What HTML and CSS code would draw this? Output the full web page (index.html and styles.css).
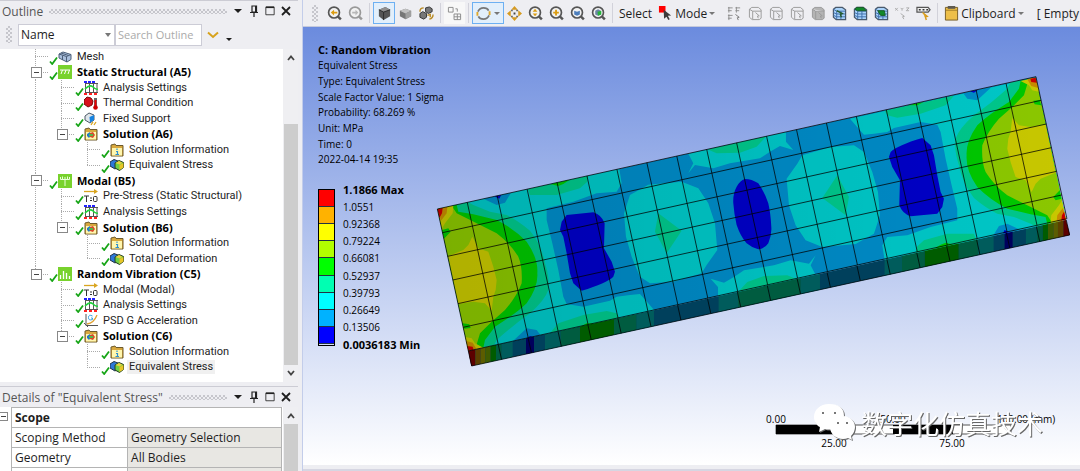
FILE: index.html
```html
<!DOCTYPE html>
<html lang="en">
<head>
    <meta charset="UTF-8">
    <title>Random Vibration - Equivalent Stress</title>
    <link rel="stylesheet" href="styles.css">
</head>
<body>

<!-- shared icons -->
<svg class="defs" width="0" height="0">
    <symbol id="check" viewBox="0 0 9 9"><path d="M1 5.5L3.2 8L8 1.5" fill="none" stroke="#16a516" stroke-width="1.8"/></symbol>
    <symbol id="mesh" viewBox="0 0 14 14"><path d="M1 4L5 2L13 4.500V9.500L9 12L1 8Z" fill="#a9bfdc" stroke="#4c5f78"/><path d="M1 4L8.500 6.500L13 4.500M8.500 6.500V12M4.500 5.500V10M3 3L10.500 5.500" fill="none" stroke="#4c5f78"/></symbol>
    <symbol id="static" viewBox="0 0 14 14"><rect width="14" height="14" fill="#78d22d"/><path d="M2 5H12M4.500 5L3 9M8 5L6.500 9M11.500 5L10 9" fill="none" stroke="#fff"/></symbol>
    <symbol id="modal" viewBox="0 0 14 14"><rect width="14" height="14" fill="#78d22d"/><path d="M7 3V12M2.500 3V5.500H11.500V3M4.500 2.500V5M9.500 2.500V5" fill="none" stroke="#e8ffd8"/></symbol>
    <symbol id="random" viewBox="0 0 14 14"><rect width="14" height="14" fill="#78d22d"/><path d="M2.500 12V8M5.500 12V4M8.500 12V6M11.500 12V9" stroke="#fff" stroke-width="1.300"/></symbol>
    <symbol id="settings" viewBox="0 0 14 14"><path d="M1.500 2V12M5.500 2V12M9.500 2V12M13 2V12M1 2.500H14M1 11.500H14" stroke="#555" fill="none"/><path d="M1 8Q6 3 9 6T14 8" fill="none" stroke="#1fd43a" stroke-width="1.500"/><path d="M0 1H11" stroke="#22f" stroke-width="2" stroke-dasharray="3 1"/><path d="M0 13H14" stroke="#f22" stroke-width="2" stroke-dasharray="3 2"/></symbol>
    <symbol id="thermal" viewBox="0 0 14 14"><path d="M0 4L3 1L7 2L9 5L8 9L4 11L0 8Z" fill="#d8101a" stroke="#7a0a0a"/><path d="M11.500 2V10" stroke="#666" stroke-width="3"/><path d="M11.500 4V11" stroke="#e00" stroke-width="1.800"/><circle cx="11.500" cy="11.500" r="2.300" fill="#c00"/></symbol>
    <symbol id="fixed" viewBox="0 0 14 14"><path d="M1 4L5 1L10 3V8L6 11L1 8Z" fill="#dfe5ea" stroke="#4c5a68"/><path d="M5.500 5L10 3V8L6 10.500Z" fill="#1683e0"/><path d="M7 13L9 10M10 13L12 10" stroke="#d9a520" stroke-width="1.300"/></symbol>
    <symbol id="folder" viewBox="0 0 14 14"><path d="M1 2L5 1L6 2.500H13V13H1Z" fill="#d8a83e" stroke="#6d5a2c"/><path d="M2 5H12V12.500H2Z" fill="#fff6ae"/></symbol>
    <symbol id="solution" viewBox="0 0 14 14"><use href="#folder"/><path d="M3 7L6 5L7 8L5 11L3 9Z" fill="#2576c4"/><path d="M6 6L9 5L11 8L9 11L6 10Z" fill="#d8482c"/><path d="M5 7H9V9H5Z" fill="#54b848"/></symbol>
    <symbol id="info" viewBox="0 0 14 14"><use href="#folder"/><path d="M7 5.500V7M6 8.500H7.500V11.500M5.500 11.500H9" fill="none" stroke="#2d8fd0" stroke-width="1.200"/></symbol>
    <symbol id="stress" viewBox="0 0 14 14"><path d="M0 4L4 1.500L8 3V9L5 11L0 8Z" fill="#2d78d8" stroke="#234"/><path d="M5 5L9 2.500L13.500 4.500V9.500L9.500 12.500L5 10Z" fill="#6fd044" stroke="#243c20"/><path d="M9.500 7L13.500 5V9.500L9.500 12Z" fill="#e8c628"/><path d="M5.500 5L9 3L12.500 4.700L9.500 6.500Z" fill="#e8d040"/></symbol>
    <symbol id="tzero" viewBox="0 0 14 14"><path d="M0 2.500H11" stroke="#d9a520" stroke-width="1.300"/><path d="M10 0L14 2.500L10 5Z" fill="#d9a520"/><path d="M0 7H5M2.500 7V13M6 9H8M6 11.500H8" stroke="#333" fill="none"/><rect x="9.500" y="7.500" width="3.500" height="5" rx="1" fill="none" stroke="#333"/></symbol>
    <symbol id="psd" viewBox="0 0 14 14"><path d="M2 0V11.500H14M0 9L4 13" fill="none" stroke="#555"/><path d="M3 10Q10 9 13 1" fill="none" stroke="#e0a030" stroke-width="1.300"/><path d="M8.500 2Q4.500 0 4.500 3.500T8.500 5.500V4H7" fill="none" stroke="#38a0e0"/></symbol>
    <symbol id="pin" viewBox="0 0 10 12"><path d="M3 1H7.500V7H3ZM1 7.500H9M5 7.500V12" fill="none" stroke="#222" stroke-width="1.200"/><path d="M6 1H8V7H6Z" fill="#222"/></symbol>
    <symbol id="close" viewBox="0 0 10 10"><path d="M1 1L9 9M9 1L1 9" stroke="#1e1e1e" stroke-width="1.800"/></symbol>
    <symbol id="max" viewBox="0 0 12 12"><path d="M1 1.500H11V10.500H1Z" fill="none" stroke="#222"/><path d="M1 1.500H11" stroke="#222" stroke-width="2"/></symbol>
    <symbol id="up" viewBox="0 0 8 6"><path d="M1 5L4 1.500L7 5" fill="none" stroke="#444" stroke-width="1.800"/></symbol>
    <symbol id="lens" viewBox="0 0 16 16"><circle cx="7.500" cy="7" r="5.800" fill="#f2f2f2" stroke="currentColor" stroke-width="1.800"/><path d="M11.500 11L14.800 14.300" stroke="currentColor" stroke-width="2.600"/></symbol>
    <symbol id="wire" viewBox="0 0 16 16"><path d="M1.500 3.500L4 1.500H11L14 4V13L12 14.500H4.500L1.500 12ZM1.500 3.500L5 5.500H14M5 5.500V14" stroke="currentColor"/><path d="M8 7L12 10.500L10 10.800L11 13" fill="none" stroke="currentColor"/></symbol>
    <symbol id="blue" viewBox="0 0 16 16"><path d="M1.500 3.500L4 1.500H11L14.500 4V14.500H4.500L1.500 12Z" fill="#a9d2fa" stroke="#4a5a6c" stroke-width="1.300"/><path d="M1.500 7L5 8.500H14M1.500 10L5 11.500H14M5 5.500V14M9.500 5.500V14M1.500 3.500L5 5.500H14" stroke="#3d6eaa" fill="none"/></symbol>
</svg>

<div class="app">
    <aside class="side">
        <section class="outline">
            <header class="bar">
                <h2>Outline</h2><span class="dots"></span>
                <button class="tri" aria-label="Menu"></button>
                <button aria-label="Pin"><svg width="10" height="12"><use href="#pin"/></svg></button>
                <button aria-label="Maximize"><svg width="12" height="12"><use href="#max"/></svg></button>
                <button aria-label="Close"><svg width="10" height="10"><use href="#close"/></svg></button>
            </header>
            <div class="filter">
                <span class="grip"></span>
                <div class="pick"><select aria-label="Filter by"><option>Name</option></select></div>
                <input type="text" placeholder="Search Outline" aria-label="Search Outline">
                <button class="go" aria-label="Search"><svg width="12" height="8" viewBox="0 0 12 8"><path d="M1 1.500L6 6L11 1.500" fill="none" stroke="#d7a21c" stroke-width="2"/></svg></button>
                <button class="tri small" aria-label="More"></button>
            </div>
            <div class="pane">
                <ul class="tree">
                    <li class="l1"><i></i><svg class="ok"><use href="#check"/></svg><svg class="ico"><use href="#mesh"/></svg><span>Mesh</span></li>
                    <li class="l1 open"><i></i><svg class="ok"><use href="#check"/></svg><svg class="ico"><use href="#static"/></svg><b>Static Structural (A5)</b></li>
                    <li class="l2"><i></i><svg class="ok"><use href="#check"/></svg><svg class="ico"><use href="#settings"/></svg><span>Analysis Settings</span></li>
                    <li class="l2"><i></i><svg class="ok"><use href="#check"/></svg><svg class="ico"><use href="#thermal"/></svg><span>Thermal Condition</span></li>
                    <li class="l2"><i></i><svg class="ok"><use href="#check"/></svg><svg class="ico"><use href="#fixed"/></svg><span>Fixed Support</span></li>
                    <li class="l2 open last"><i></i><svg class="ok"><use href="#check"/></svg><svg class="ico"><use href="#solution"/></svg><b>Solution (A6)</b></li>
                    <li class="l3"><i></i><svg class="ok"><use href="#check"/></svg><svg class="ico"><use href="#info"/></svg><span>Solution Information</span></li>
                    <li class="l3 last"><i></i><svg class="ok"><use href="#check"/></svg><svg class="ico"><use href="#stress"/></svg><span>Equivalent Stress</span></li>
                    <li class="l1 open"><i></i><svg class="ok"><use href="#check"/></svg><svg class="ico"><use href="#modal"/></svg><b>Modal (B5)</b></li>
                    <li class="l2"><i></i><svg class="ok"><use href="#check"/></svg><svg class="ico"><use href="#tzero"/></svg><span>Pre-Stress (Static Structural)</span></li>
                    <li class="l2"><i></i><svg class="ok"><use href="#check"/></svg><svg class="ico"><use href="#settings"/></svg><span>Analysis Settings</span></li>
                    <li class="l2 open last"><i></i><svg class="ok"><use href="#check"/></svg><svg class="ico"><use href="#solution"/></svg><b>Solution (B6)</b></li>
                    <li class="l3"><i></i><svg class="ok"><use href="#check"/></svg><svg class="ico"><use href="#info"/></svg><span>Solution Information</span></li>
                    <li class="l3 last"><i></i><svg class="ok"><use href="#check"/></svg><svg class="ico"><use href="#stress"/></svg><span>Total Deformation</span></li>
                    <li class="l1 open last"><i></i><svg class="ok"><use href="#check"/></svg><svg class="ico"><use href="#random"/></svg><b>Random Vibration (C5)</b></li>
                    <li class="l2 tail"><i></i><svg class="ok"><use href="#check"/></svg><svg class="ico"><use href="#tzero"/></svg><span>Modal (Modal)</span></li>
                    <li class="l2 tail"><i></i><svg class="ok"><use href="#check"/></svg><svg class="ico"><use href="#settings"/></svg><span>Analysis Settings</span></li>
                    <li class="l2 tail"><i></i><svg class="ok"><use href="#check"/></svg><svg class="ico"><use href="#psd"/></svg><span>PSD G Acceleration</span></li>
                    <li class="l2 tail open last"><i></i><svg class="ok"><use href="#check"/></svg><svg class="ico"><use href="#solution"/></svg><b>Solution (C6)</b></li>
                    <li class="l3 tail"><i></i><svg class="ok"><use href="#check"/></svg><svg class="ico"><use href="#info"/></svg><span>Solution Information</span></li>
                    <li class="l3 tail last"><i></i><svg class="ok"><use href="#check"/></svg><svg class="ico"><use href="#stress"/></svg><span class="current">Equivalent Stress</span></li>
                </ul>
                <div class="scroll">
                    <svg width="8" height="6"><use href="#up"/></svg>
                    <div class="thumb"></div>
                    <svg class="down" width="8" height="6"><use href="#up"/></svg>
                </div>
            </div>
        </section>

        <section class="details">
            <header class="bar">
                <h2>Details of "Equivalent Stress"</h2><span class="dots"></span>
                <button class="tri" aria-label="Menu"></button>
                <button aria-label="Pin"><svg width="10" height="12"><use href="#pin"/></svg></button>
                <button aria-label="Maximize"><svg width="12" height="12"><use href="#max"/></svg></button>
                <button aria-label="Close"><svg width="10" height="10"><use href="#close"/></svg></button>
            </header>
            <div class="pane">
                <div class="fold"><span class="minus"></span></div>
                <table>
                    <tr><th colspan="2">Scope</th></tr>
                    <tr><td>Scoping Method</td><td class="val">Geometry Selection</td></tr>
                    <tr><td>Geometry</td><td class="val">All Bodies</td></tr>
                    <tr><td></td><td class="val"></td></tr>
                </table>
                <div class="scroll">
                    <svg width="8" height="6"><use href="#up"/></svg>
                    <div class="thumb full"></div>
                </div>
            </div>
        </section>
    </aside>

    <main class="main">
        <nav class="tools">
            <span class="grip"></span>
            <button class="first" aria-label="Previous view"><svg class="t" viewBox="0 0 16 16"><use href="#lens"/><path d="M4 7L7.500 4V6H11V8H7.500V10Z" fill="#dc9d12"/></svg></button>
            <button class="off" aria-label="Next view"><svg class="t" viewBox="0 0 16 16"><use href="#lens"/><path d="M11 7L8 4V6H4.500V8H8V10Z" fill="#b8b8b8"/></svg></button>
            <span class="sep"></span>
            <button class="on" aria-label="Shaded with edges"><svg class="t" viewBox="0 0 16 16"><path d="M2 4L9 1L14 4V11L7 15L2 11Z" fill="#555"/><path d="M2 4L9 1L14 4L7 6.500Z" fill="#909090"/><path d="M2 4L7 6.500V15M7 6.500L14 4" fill="none" stroke="#2b2b2b"/></svg></button>
            <button aria-label="Shaded"><svg class="t" viewBox="0 0 16 16"><path d="M2 5L8 3L14 5V11L8 14L2 11Z" fill="#777"/><path d="M2 5L8 3L14 5L8 8Z" fill="#c2c2c2"/><path d="M8 8L14 5V11L8 14Z" fill="#a0a0a0"/></svg></button>
            <button aria-label="Show bodies"><svg class="t" viewBox="0 0 16 16"><path d="M7 2L11 1L14 3V6L10 8L7 6ZM1 8L4 6L8 8V12L5 14L1 12Z" fill="#777" stroke="#333"/><path d="M1 6Q1 2 5 2M15 9Q15 13 11 14M9 10L12 9V12" fill="none" stroke="#b98b24" stroke-width="1.500"/></svg></button>
            <span class="sep"></span>
            <button class="pale" aria-label="Explode"><svg class="t" viewBox="0 0 16 16"><path d="M1.500 1.500H6.500V6.500H1.500ZM7.500 8.500H14.500V14.500H7.500ZM11 8.500V14.500M7.500 11.500H14.500M9 3H11V6" fill="none" stroke="#8b8b8b"/></svg></button>
            <span class="sep"></span>
            <button class="on wide" aria-label="Rotate"><svg class="t" viewBox="0 0 16 16"><path d="M2 6Q4 2 8 2T13.500 5M14 10Q12 14 8 14T2.500 11" fill="none" stroke="#777" stroke-width="1.900"/><path d="M1.500 6.500V10.500M14.500 5.500V9.500" stroke="#e0a92b" stroke-width="2"/></svg><span class="caret"></span></button>
            <button aria-label="Pan"><svg class="t" viewBox="0 0 16 16"><path d="M8 0L11.500 4H4.500ZM8 16L4.500 12H11.500ZM0 8L4 4.500V11.500ZM16 8L12 11.500V4.500Z" fill="#d69b20"/><path d="M7 7H9V9H7ZM4.500 4H6V5.500H4.500ZM10 10.500H11.500V12H10ZM10 4H11.500V5.500H10ZM4.500 10.500H6V12H4.500Z" fill="#444"/></svg></button>
            <button aria-label="Zoom"><svg class="t" viewBox="0 0 16 16"><use href="#lens"/><path d="M7.500 3L10 6H5ZM7.500 11L5 8H10Z" fill="#dc9d12"/></svg></button>
            <button aria-label="Box zoom"><svg class="t" viewBox="0 0 16 16"><use href="#lens"/><path d="M7.500 4V10M4.500 7H10.500" stroke="#dc9d12" stroke-width="2"/></svg></button>
            <button aria-label="Zoom to fit"><svg class="t" viewBox="0 0 16 16"><use href="#lens"/><path d="M4.500 5L7.500 6L10.500 5V9L7.500 10.500L4.500 9Z" fill="#4d7ebc"/></svg></button>
            <button aria-label="Zoom to selection"><svg class="t" viewBox="0 0 16 16"><use href="#lens"/><path d="M4.500 5L7.500 3.500L10.500 5V9L7.500 10.500L4.500 9Z" fill="#6d86a4"/><path d="M7 6L11 5V9L7.500 10.500Z" fill="#27b43c"/></svg></button>
            <span class="sep"></span>
            <span class="word">Select</span>
            <button class="mode"><svg class="t" viewBox="0 0 16 16"><path d="M1 0H8V7H1Z" fill="#f00"/><path d="M6 4L14 10L10.500 10.500L12.500 14L11 15L9 11.500L6.500 13.500Z" fill="#3c3c3c"/></svg>Mode<span class="caret"></span></button>
            <button class="off gap" aria-label="Select vertices"><svg class="t" viewBox="0 0 16 16"><path d="M1 2H6M1 5H5M2 1V7M9 2H14M9 5H13M10 1V7M1 10H6M1 13H5M2 9V15" fill="none" stroke="#8d8d8d"/><path d="M9 9L13 12L11 12.500L12 15" fill="none" stroke="#777"/></svg></button>
            <button class="off" aria-label="Vertex"><svg class="t" fill="none"><use href="#wire"/></svg></button>
            <button class="off" aria-label="Edge"><svg class="t" fill="none"><use href="#wire"/></svg></button>
            <button class="off" aria-label="Face"><svg class="t" fill="none"><use href="#wire"/></svg></button>
            <button class="off" aria-label="Body"><svg class="t" fill="#b4b4b4"><use href="#wire"/></svg></button>
            <button aria-label="Node"><svg class="t" viewBox="0 0 16 16"><use href="#blue"/><path d="M5 5L11 8L9 9L10 12" fill="none" stroke="#265c30" stroke-width="1.500"/></svg></button>
            <button aria-label="Element face"><svg class="t" viewBox="0 0 16 16"><use href="#blue"/><path d="M2 3.500L4 1.500H11L14 5H5Z" fill="#128a2a" stroke="#185c26"/></svg></button>
            <button aria-label="Element"><svg class="t" viewBox="0 0 16 16"><use href="#blue"/><path d="M4 5L11 5L12 10L7 10Z" fill="#128a2a" stroke="#185c26"/></svg></button>
            <button class="off" aria-label="Coordinates"><svg class="t" viewBox="0 0 16 16"><path d="M0 2L3 5M3 2L0 5M6 2L7.500 3.500L9 2M7.500 3.500V5M12 2H15L12 5H15M6 8L10 11L8 11.500L9.500 14" fill="none" stroke="#aaa"/></svg></button>
            <button aria-label="Label"><svg class="t" viewBox="0 0 16 16"><path d="M1 1.500H13L15 4L13 6.500H1Z" fill="#eee" stroke="#555" stroke-width="1.300"/><path d="M3 4H5M7 4H9M11 4H13" stroke="#333" stroke-width="1.500"/><path d="M7 7L12 11L10 11.500L11 15" fill="#e0a92b" stroke="#d99c1b" stroke-width="1.500"/></svg></button>
            <span class="sep"></span>
            <button class="clip"><svg class="t" viewBox="0 0 16 16"><path d="M1.500 1.500H14.500V15H1.500Z" fill="#edbf49" stroke="#735c26"/><path d="M4 0H12V3H4Z" fill="#5e5a50"/><path d="M2 4.500H14" stroke="#a07c26"/></svg>Clipboard<span class="caret"></span></button>
            <span class="word">[ Empty</span>
        </nav>

        <div class="view">
            <svg class="scene" viewBox="303 27 777 438">
                <defs>
                    <clipPath id="face"><path d="M22 87L1818 -310L1908 120L115 513Z"/></clipPath>
                    <clipPath id="edge"><path d="M115 513L1908 120L1920 165L124 558Z"/></clipPath>
                    <linearGradient id="light"><stop offset="0" stop-opacity=".31"/><stop offset="1" stop-opacity=".22"/></linearGradient>
                    <!-- left half of the stress field, the right half is the same turned by 180 degrees -->
                    <g id="half">
                        <path class="c3" d="M22 87L568 -34L575 10L560 35L500 40L430 65L350 85V120L367 190L385 270L400 350L410 372L460 380L540 362L560 350L600 345L630 342L655 370L672 390L115 513Z"/>
                        <path class="c4" d="M60 78L113 66L130 75L180 95L230 105Q265 122 300 152Q335 195 345 250Q360 295 355 330Q345 360 300 400Q250 435 200 480L190 500L115 513L22 87Z"/>
                        <path class="c5" d="M80 74L85 95L130 103L200 120Q250 145 290 185Q325 235 322 280Q325 320 290 370Q260 400 195 440L165 480L160 503L115 513L22 87Z"/>
                        <path class="c6" d="M65 77L80 100L140 130L200 160Q240 190 265 230Q278 260 275 310Q260 350 225 390L185 425L150 460L135 510L115 513L22 87Z"/>
                        <path class="c7" d="M127 170L145 205L175 215L190 260L200 300L197 330L190 350L185 392L165 370L130 365L85 372L55 228L100 210L115 195Z"/>
                        <path class="c7" d="M22 87L70 76L68 100L45 130L36 145ZM115 513L102 470L125 475L135 490L160 503Z"/>
                        <path class="c8" d="M22 87L52 80L50 100L33 122ZM115 513L107 482L128 488L140 508Z"/>
                        <path class="c9" d="M22 87L38 83L36 100L28 114ZM115 513L111 498L128 500L131 510Z"/>
                        <path class="c5" d="M36 150L55 145L62 155L42 176ZM98 430L118 433L122 444L103 446Z"/>
                        <path class="c4" d="M293 26L300 45L380 45L450 25L472 5L475 -14ZM360 459L385 430L460 405L530 393L560 400L568 414Z"/>
                        <path class="c5" d="M360 12L385 18L400 12L422 -2ZM450 440L470 430L500 430Z"/>
                        <path class="c2" d="M160 56L200 75L225 68L243 38ZM248 484L290 445L320 450L332 466Z"/>
                        <path class="c1" d="M193 49L208 56L214 44ZM285 478L300 468L312 472Z"/>
                        <path class="c1" d="M410 105L490 97Q515 105 524 130L522 205L545 245L555 275L550 290Q530 310 455 332L430 310L420 280L410 220L400 170L390 150L395 125Z"/>
                        <path class="c3" d="M600 45L655 14L755 5L805 25L835 70L855 130L862 210L830 255L815 280L730 305L660 310L630 290L605 230L588 170L582 100Z"/>
                        <path class="c4" d="M685 100L755 152L710 220L675 155Z"/>
                        <path class="c3" d="M775 -79L1068 -144V-115L1090 -90L1050 -102L1020 -85L990 -65L900 -50L850 -35L795 -45L775 -20L790 -50Z"/>
                        <path class="c4" d="M832 -92L860 -80L930 -82L980 -100L1010 -132Z"/>
                    </g>
                    <g id="bands">
                        <path class="c9" d="M110 0H136V600H110Z"/><path class="c8" d="M136 0H152V600H136Z"/>
                        <path class="c7" d="M152 0H166V600H152Z"/><path class="c6" d="M166 0H182V600H166Z"/>
                        <path class="c5" d="M182 0H198V600H182Z"/><path class="c4" d="M198 0H215V600H198Z"/>
                        <path class="c3" d="M215 0H248V600H215Z"/><path class="c1" d="M288 0H312V600H288Z"/>
                        <path class="c3" d="M345 0H392V600H345Z"/><path class="c4" d="M392 0H450V600H392Z"/>
                        <path class="c5" d="M450 0H552V600H450Z"/><path class="c4" d="M552 0H620V600H552Z"/>
                        <path class="c3" d="M620 0H672V600H620Z"/><path class="c3" d="M866 -100H924V600H866Z"/>
                        <path class="c4" d="M924 -100H1018V600H924Z"/>
                    </g>
                </defs>

                <g transform="translate(430 180) scale(.3333)">
                    <g clip-path="url(#face)">
                        <path class="c2" d="M22 87L1818 -310L1908 120L115 513Z"/>
                        <use href="#half"/>
                        <use href="#half" transform="rotate(180 966 103)"/>
                        <path class="c1" d="M945 -3Q965 -3 985 10Q1003 35 1015 70Q1022 100 1024 140Q1026 165 1015 190Q1005 206 985 208Q965 203 950 190Q932 170 920 135Q912 100 910 70Q908 42 920 20Q930 2 945 -3Z"/>
                    </g>
                    <path fill="url(#light)" d="M22 87L1818 -310L1908 120L115 513Z"/>
                    <g clip-path="url(#edge)">
                        <path class="c2" d="M100 600V0L1930 0V600Z"/>
                        <use href="#bands"/>
                        <use href="#bands" transform="translate(2036 0) scale(-1 1)"/>
                        <path d="M100 600V0H1930V600Z" fill-opacity=".64"/>
                    </g>
                    <g class="lines">
                        <path transform="matrix(89.8 -19.85 15.5 71 22 87)" d="M0 0H20V6H0ZM0 1H20M0 2H20M0 3H20M0 4H20M0 5H20M1 0V6M2 0V6M3 0V6M4 0V6M5 0V6M6 0V6M7 0V6M8 0V6M9 0V6M10 0V6M11 0V6M12 0V6M13 0V6M14 0V6M15 0V6M16 0V6M17 0V6M18 0V6M19 0V6"/>
                        <path transform="matrix(89.7 -19.65 10 45 115 513)" d="M0 0V1H20V0M1 0V1M2 0V1M3 0V1M4 0V1M5 0V1M6 0V1M7 0V1M8 0V1M9 0V1M10 0V1M11 0V1M12 0V1M13 0V1M14 0V1M15 0V1M16 0V1M17 0V1M18 0V1M19 0V1"/>
                    </g>
                </g>

                <!-- scale ruler -->
                <path d="M776 425H1011V434H776Z" fill="#fff" stroke="#555"/>
                <path d="M776 425H835V434H776ZM893 425H953V434H893Z"/>
                <g class="ruler">
                    <text x="776" y="423">0.00</text>
                    <text x="893" y="423">50.00</text>
                    <text x="1026" y="423">100.00 (mm)</text>
                    <text x="834" y="447">25.00</text>
                    <text x="952" y="447">75.00</text>
                </g>

                <g class="mark">
                    <path d="M829 404C820 404 814 410 814 417C814 421 816 425 820 427L819 432L825 429Q828 430 832 429Q836 420 844 416Q844 404 829 404Z"/>
                    <path d="M843 416C835 416 830 421 830 427C830 434 836 439 843 439Q846 439 848 438L852 440L851 436Q855 432 855 427C855 421 850 416 843 416Z"/>
                    <path class="eye" d="M822 412h2v2h-2zM834 412h2v2h-2zM837 422h2v2h-2zM846 422h2v2h-2z"/>
                    <text x="861" y="434">数字化仿真技术</text>
                </g>
            </svg>

            <div class="info">
                <h1>C: Random Vibration</h1>
                <p>Equivalent Stress</p>
                <p>Type: Equivalent Stress</p>
                <p>Scale Factor Value: 1 Sigma</p>
                <p>Probability: 68.269 %</p>
                <p>Unit: MPa</p>
                <p>Time: 0</p>
                <p>2022-04-14 19:35</p>
            </div>
            <div class="legend">
                <div class="ramp"><i class="k9"></i><i class="k8"></i><i class="k7"></i><i class="k6"></i><i class="k5"></i><i class="k4"></i><i class="k3"></i><i class="k2"></i><i class="k1"></i></div>
                <div class="nums"><b>1.1866 Max</b><span>1.0551</span><span>0.92368</span><span>0.79224</span><span>0.66081</span><span>0.52937</span><span>0.39793</span><span>0.26649</span><span>0.13506</span><b>0.0036183 Min</b></div>
            </div>
        </div>
        <div class="foot"></div>
    </main>
</div>

</body>
</html>
```
FILE: styles.css
```css
* {
    margin: 0;
    padding: 0;
    box-sizing: border-box;
}

body {
    height: 100vh;
    overflow: hidden;
    background: #eeeef2;
    color: #1e1e1e;
    font: 12px "Open Sans", "Noto Sans", sans-serif;
}

.defs {
    position: absolute;
}

button {
    border: 0;
    background: none;
    color: inherit;
    font: inherit;
    display: flex;
    align-items: center;
    justify-content: center;
    flex: none;
}

.app {
    display: flex;
    height: 100%;
}

/* left column */
.side {
    width: 303px;
    flex: none;
    display: flex;
    flex-direction: column;
    padding-right: 4px;
    border-right: 1px solid #c3cdea;
}

.outline {
    height: 382px;
    flex: none;
    display: flex;
    flex-direction: column;
    border-top: 1px solid #ccccd4;
}

.details {
    flex: 1;
    min-height: 0;
    margin-top: 4px;
    display: flex;
    flex-direction: column;
    border-top: 1px solid #ccccd4;
    overflow: hidden;
}

.bar {
    height: 20px;
    flex: none;
    display: flex;
    align-items: center;
    gap: 6px;
    padding: 0 7px 0 2px;
}

.bar h2 {
    font-size: 12px;
    font-weight: normal;
    color: #555;
    white-space: nowrap;
}

.bar button {
    width: 10px;
}

.dots {
    flex: 1;
    height: 5px;
    background: conic-gradient(#c6c6cc 25%, transparent 0 50%, #c6c6cc 0 75%, transparent 0) 0 0 / 4px 4px;
}

.tri::before {
    content: "";
    border: 4px solid transparent;
    border-top-color: #1e1e1e;
    border-bottom: 0;
}

.small::before {
    border-width: 3px;
    border-bottom: 0;
}

.filter {
    height: 28px;
    flex: none;
    display: flex;
    align-items: center;
    padding: 0 0 1px 6px;
}

.grip {
    width: 6px;
    height: 17px;
    flex: none;
    background: conic-gradient(#c6c6cc 25%, transparent 0 50%, #c6c6cc 0 75%, transparent 0) 0 0 / 4px 4px;
}

.pick {
    position: relative;
    width: 97px;
    margin-left: 6px;
}

.pick::after {
    content: "";
    position: absolute;
    right: 4px;
    top: 9px;
    border: 3px solid transparent;
    border-top: 4px solid #777;
    border-bottom: 0;
}

.filter select,
.filter input {
    width: 100%;
    height: 22px;
    border: 1px solid #ccccd6;
    background: #fff;
    padding: 0 2px;
    font: 12px "Open Sans", sans-serif;
    color: #1e1e1e;
    appearance: none;
    border-radius: 0;
}

.filter input {
    width: 87px;
    font-size: 11px;
}

.filter input::placeholder {
    color: #aaa;
}

.go {
    width: 22px;
}

.filter .small {
    width: 9px;
    padding-top: 9px;
}

.pane {
    flex: 1;
    min-height: 0;
    display: flex;
    background: #fff;
}

/* tree */
.tree {
    --dots: repeating-linear-gradient(#aaa 0 1px, transparent 1px 2px);
    flex: 1;
    list-style: none;
    display: grid;
    grid-auto-rows: 1fr;
    padding-bottom: 7px;
    font: 11px Roboto, "Open Sans", sans-serif;
}

.tree li {
    position: relative;
    display: flex;
    align-items: center;
    min-height: 0;
    white-space: nowrap;
    background-image: var(--dots), var(--dots);
    background-repeat: no-repeat;
    background-size: 1px 100%;
    background-position: 35px 0;
}

.tree .l1 {
    padding-left: 35px;
}

.tree .l2 {
    padding-left: 61px;
    background-position: 61px 0, 35px 0;
}

.tree .l3 {
    padding-left: 87px;
    background-position: 87px 0, 35px 0;
}

.tree .last {
    background-size: 1px 50%, 1px 100%;
}

.tree .l1.last,
.tree .tail {
    background-image: var(--dots);
}

.tree i {
    width: 14px;
    height: 1px;
    background: repeating-linear-gradient(90deg, #aaa 0 1px, transparent 1px 2px);
}

.tree .open::before {
    content: "";
    position: absolute;
    width: 9px;
    height: 9px;
    margin-left: -4px;
    border: 1px solid #888;
    background: linear-gradient(#444, #444) center / 5px 1px no-repeat #fff;
}

.ok {
    width: 9px;
    height: 9px;
    align-self: flex-end;
}

.ico {
    width: 14px;
    height: 14px;
    margin-right: 3px;
}

.tree span,
.tree b {
    line-height: 14px;
    padding: 0 2px;
}

.tree b {
    font-family: "Open Sans", sans-serif;
    color: #000;
}

.tree .current {
    background: #f0f0f0;
}

.scroll {
    width: 15px;
    flex: none;
    background: #efeff2;
    display: flex;
    flex-direction: column;
    align-items: center;
    padding: 6px 0;
}

.thumb {
    width: 14px;
    flex: 1;
    margin: 63px 0 5px;
    background: #cdcdcd;
}

.full {
    margin: 5px 0 -6px;
}

.down {
    transform: rotate(180deg);
}

/* details */
.fold {
    width: 11px;
    padding-top: 5px;
}

.minus {
    display: block;
    width: 8px;
    height: 9px;
    border: 1px solid #888;
    border-left: 0;
    background: linear-gradient(#444, #444) center / 5px 1px no-repeat;
}

.details table {
    flex: 1;
    border-collapse: collapse;
    table-layout: fixed;
    align-self: flex-start;
    margin-right: 1px;
}

.details tr {
    height: 20px;
}

.details th,
.details td {
    height: 20px;
    border: 1px solid #b4b4b4;
    padding: 0 3px;
    line-height: 16px;
    text-align: left;
    white-space: nowrap;
}

.details td {
    width: 43%;
}

.details .val {
    width: 57%;
    background: #e8e7e3;
}

/* toolbar */
.main {
    flex: 1;
    min-width: 0;
    display: flex;
    flex-direction: column;
}

.tools {
    height: 27px;
    flex: none;
    display: flex;
    align-items: center;
    padding-left: 9px;
    overflow: hidden;
    white-space: nowrap;
    border-bottom: 1px solid #c4c9dc;
}

.tools button {
    width: 21px;
    height: 22px;
    color: #555;
}

.tools .first {
    margin-left: 6px;
}

.tools .off {
    color: #999;
}

.tools .on {
    width: 22px;
    border: 1px solid #6db0f2;
    background: #e2effb;
}

.tools .wide {
    width: 32px;
    gap: 3px;
}

.tools .pale {
    background: #f8f8f8;
}

.t {
    width: 15px;
    height: 15px;
    flex: none;
}

.sep {
    width: 1px;
    height: 20px;
    margin: 0 3px;
    flex: none;
    background: #d2d2da;
}

.caret {
    border: 3px solid transparent;
    border-top-color: #777;
    border-bottom: 0;
}

.word {
    padding: 0 3px;
}

.tools .mode,
.tools .clip {
    width: auto;
    gap: 2px;
    padding: 0 3px;
    color: #1e1e1e;
}

.tools .gap {
    margin-left: 6px;
}

.tools .clip + .word {
    padding: 0 0 0 10px;
}

/* graphics window */
.view {
    flex: 1;
    min-height: 0;
    position: relative;
    padding: 15px;
    color: #000;
    font-size: 10px;
    background: linear-gradient(#6b8bde, #fff);
}

.scene {
    position: absolute;
    left: 0;
    top: 0;
    width: 100%;
    height: 100%;
}

.info,
.legend {
    position: relative;
}

.info {
    height: 125px;
    display: grid;
    grid-auto-rows: 1fr;
    align-items: center;
}

.info h1 {
    font-size: 11px;
}

.legend {
    display: flex;
    align-items: center;
    gap: 8px;
    height: 172px;
    margin-top: 14px;
}

.ramp {
    width: 17px;
    height: 157px;
    border: 1px solid #000;
    display: flex;
    flex-direction: column;
}

.ramp i {
    flex: 1;
    border-bottom: 1px solid #234;
}

.nums {
    height: 100%;
    display: grid;
    grid-auto-rows: 1fr;
    align-items: center;
}

.nums b {
    font-size: 11px;
}

.foot {
    height: 6px;
    flex: none;
    border-bottom: 2px solid #d6d6e2;
    background: #eeeef2;
}

/* stress colours, low to high */
.k1 { background: #00f; }
.k2 { background: #00b2ff; }
.k3 { background: #0ff; }
.k4 { background: #00ffb2; }
.k5 { background: #0f0; }
.k6 { background: #b2ff00; }
.k7 { background: #ff0; }
.k8 { background: #ffb200; }
.k9 { background: #f00; }

.c1 { fill: #00f; }
.c2 { fill: #00b2ff; }
.c3 { fill: #0ff; }
.c4 { fill: #00ffb2; }
.c5 { fill: #0f0; }
.c6 { fill: #b2ff00; }
.c7 { fill: #ff0; }
.c8 { fill: #ffb200; }
.c9 { fill: #f00; }

.lines path {
    fill: none;
    stroke: #000;
    stroke-opacity: .75;
    vector-effect: non-scaling-stroke;
}

.ruler {
    font-size: 10px;
    text-anchor: middle;
}

.mark {
    fill: #fff;
    font: 26px "Noto Sans CJK SC", sans-serif;
    filter: drop-shadow(1px 1px 0 #666);
}

.eye {
    fill: #777;
}
```
